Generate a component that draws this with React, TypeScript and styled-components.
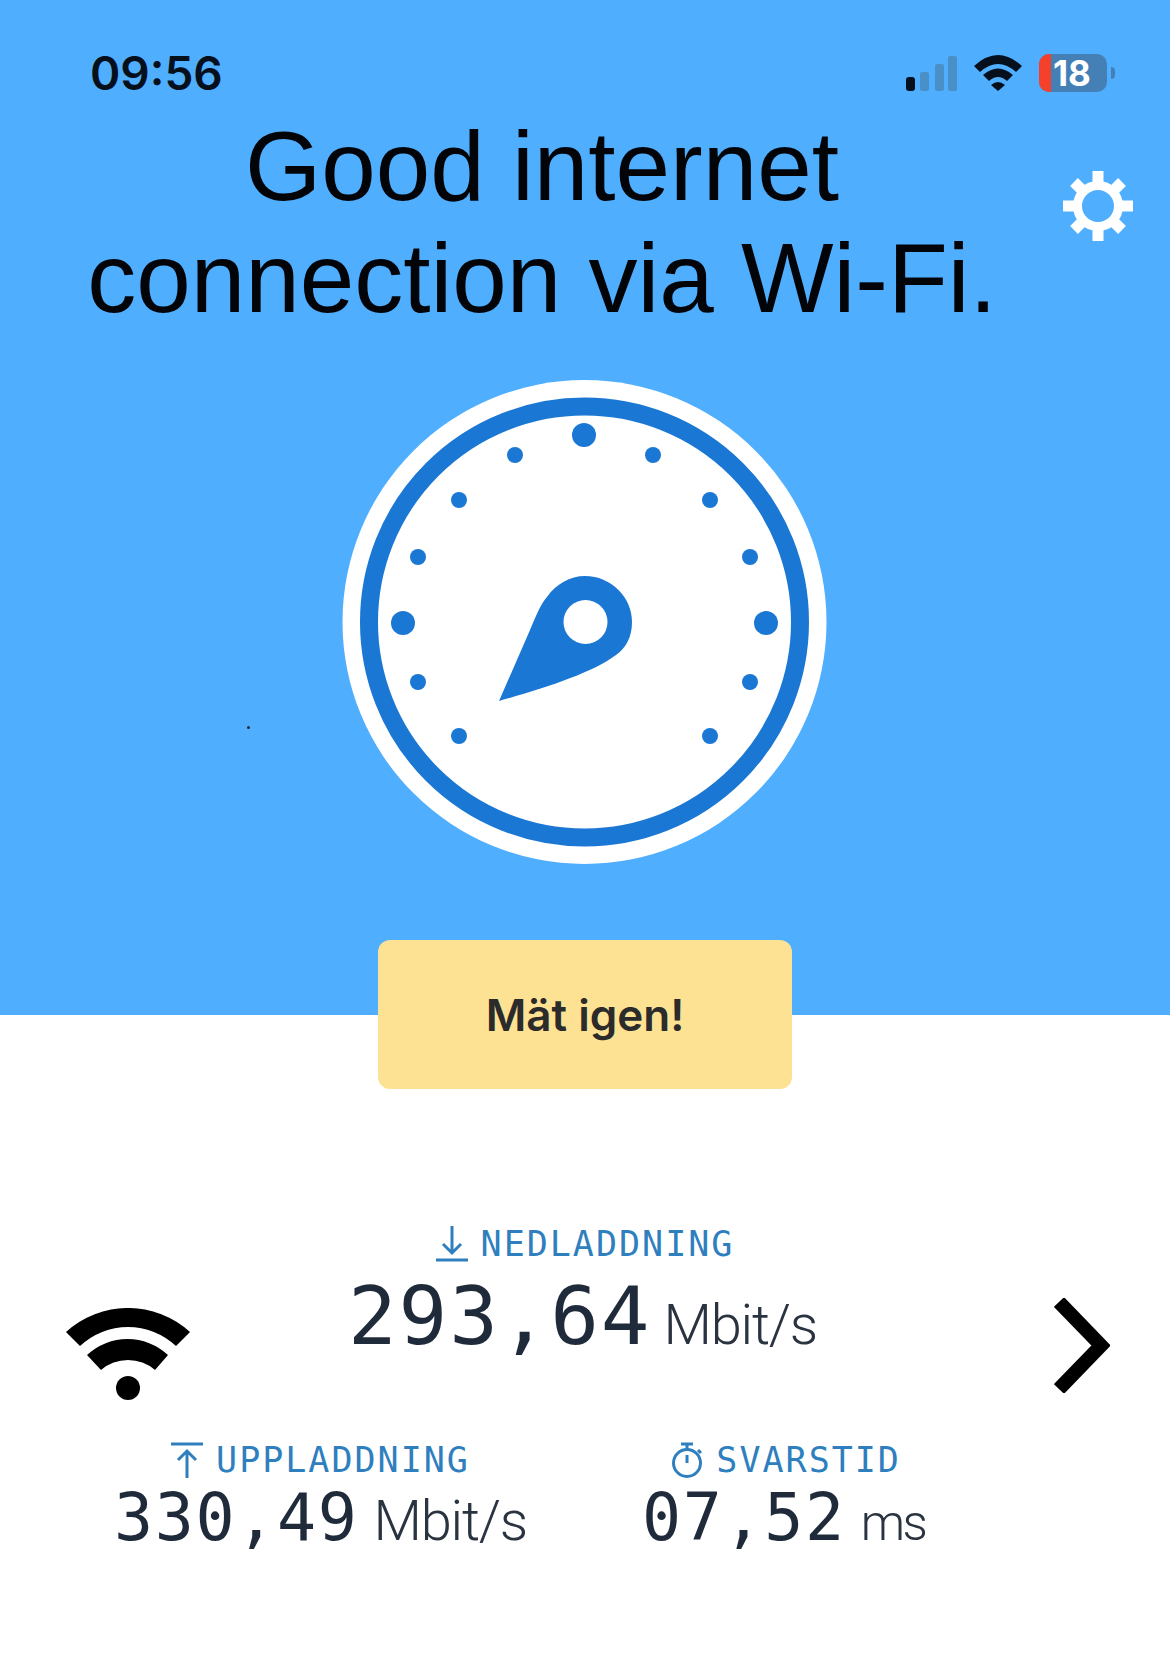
// 인터넷 속도 측정 결과 화면

import styled, { createGlobalStyle } from "styled-components";

const GlobalStyle = createGlobalStyle`
  html, body {
    margin: 0;
    padding: 0;
    background: #ffffff;
  }
  * {
    box-sizing: border-box;
  }
`;

const Page = styled.div`
  width: 1170px;
  height: 1676px;
  overflow: hidden;
  background: #ffffff;
  font-family: "Liberation Sans", Arial, sans-serif;
`;

const Hero = styled.section`
  position: relative;
  height: 1015px;
  padding-top: 54px;
  background: #50aeff;
`;

const StatusBar = styled.div`
  display: flex;
  align-items: center;
  height: 38px;
  padding: 0 55px 0 90px;
`;
const Time = styled.span`
  flex: 1;
  font-family: Inter, sans-serif;
  font-size: 46px;
  font-weight: 600;
  line-height: 38px;
  color: #06101c;
`;
const StatusIcons = styled.div`
  display: flex;
  align-items: center;
  gap: 17px;
`;
const Battery = styled.div`
  display: flex;
  align-items: center;
  width: 68px;
  height: 38px;
  border-radius: 10px;
  background: #4480b5;
`;
const BatteryLevel = styled.div`
  width: 12px;
  height: 100%;
  border-radius: 10px 0 0 10px;
  background: #f5402c;
`;
const BatteryText = styled.span`
  margin-left: 2px;
  font-family: Inter, sans-serif;
  font-size: 35px;
  font-weight: 700;
  line-height: 1;
  color: #ffffff;
`;
const BatteryCap = styled.div`
  width: 4px;
  height: 12px;
  margin-left: -13px;
  border-radius: 0 6px 6px 0;
  background: #4480b5;
`;

const TitleRow = styled.div`
  display: flex;
  align-items: flex-start;
  margin-top: 18px;
  padding-left: 80px;
`;
const Title = styled.h1`
  width: 924px;
  margin: 0;
  font-size: 98px;
  font-weight: 400;
  line-height: 112px;
  text-align: center;
  color: #020408;
`;
const GearIcon = styled.svg`
  width: 70px;
  height: 70px;
  margin: 61px 0 0 59px;
`;

const GaugeWrap = styled.div`
  display: flex;
  justify-content: center;
  margin-top: 46px;
`;
const Gauge = styled.svg`
  width: 500px;
  height: 500px;
  margin: -10px 10px -10px 0;
`;
const Speck = styled.i`
  position: absolute;
  left: 247px;
  top: 726px;
  width: 3px;
  height: 3px;
  border-radius: 50%;
  background: #1a2a3a;
`;

const ButtonRow = styled.div`
  display: flex;
  justify-content: center;
  margin-top: -75px;
`;
const MeasureButton = styled.button`
  position: relative;
  width: 414px;
  height: 149px;
  border: none;
  border-radius: 12px;
  background: #fde293;
  font-family: Inter, sans-serif;
  font-size: 44px;
  font-weight: 600;
  color: #2b2b2b;
`;

const Results = styled.section`
  display: flex;
  flex-direction: column;
  padding-top: 137px;
`;
const MainRow = styled.div`
  display: flex;
  align-items: flex-start;
  padding: 0 60px 0 66px;
`;
const WifiIcon = styled.svg`
  width: 124px;
  height: 92px;
  margin-top: 82px;
`;
const ChevronIcon = styled.svg`
  width: 56px;
  height: 95px;
  margin: 72px 0 0 auto;
`;
const CenterStat = styled.div`
  margin-left: 158px;
`;
const SubRow = styled.div`
  display: flex;
  gap: 115px;
  margin-top: 42px;
  padding-left: 114px;
`;

const Stat = styled.div`
  display: flex;
  flex-direction: column;
  align-items: center;
`;
const StatHead = styled.div<{ $inset?: number }>`
  display: flex;
  align-items: center;
  gap: 13px;
  height: 36px;
  padding-left: ${(p) => p.$inset ?? 0}px;
`;
const StatLabel = styled.span`
  font-family: "DejaVu Sans Mono", monospace;
  font-size: 35px;
  letter-spacing: 2px;
  line-height: 36px;
  color: #2f7fbf;
`;
const LabelIcon = styled.svg`
  width: 32px;
  height: 36px;
  flex: none;
  fill: none;
  stroke: #2f7fbf;
  stroke-width: 3;
`;
const StatValue = styled.div<{ $big?: boolean }>`
  display: flex;
  align-items: baseline;
  gap: ${(p) => (p.$big ? 12 : 15)}px;
  margin-top: ${(p) => (p.$big ? 10 : 4)}px;
  font-family: "DejaVu Sans Mono", monospace;
  font-size: ${(p) => (p.$big ? 81 : 65)}px;
  letter-spacing: ${(p) => (p.$big ? 1.8 : 1.6)}px;
  line-height: ${(p) => (p.$big ? 88 : 72)}px;
  color: #1f2a3a;
`;
const StatUnit = styled.span<{ $short?: boolean }>`
  font-family: Roboto, sans-serif;
  font-size: ${(p) => (p.$short ? 50 : 56)}px;
  font-weight: 300;
  letter-spacing: ${(p) => (p.$short ? -2.5 : -1.2)}px;
  color: #2a3340;
`;

const dots: [number, number, number][] = [
  [254, 65, 12],
  [185, 85, 8],
  [323, 85, 8],
  [129, 130, 8],
  [380, 130, 8],
  [88, 187, 8],
  [420, 187, 8],
  [73, 253, 12],
  [436, 253, 12],
  [88, 312, 8],
  [420, 312, 8],
  [129, 366, 8],
  [380, 366, 8],
];

const App = () => {
  return (
    <Page>
      <GlobalStyle />
      <Hero>
        <StatusBar>
          <Time>09:56</Time>
          <StatusIcons>
            <svg width="51" height="36" viewBox="0 0 51 36">
              <rect x="0" y="22" width="9" height="14" rx="3" fill="#06101c" />
              <rect x="14" y="17" width="9" height="19" rx="2" fill="#4a90c8" />
              <rect x="29" y="9" width="9" height="27" rx="2" fill="#4a90c8" />
              <rect x="42" y="1" width="9" height="35" rx="2" fill="#4a90c8" />
            </svg>
            <svg width="48" height="36" viewBox="0 0 48 36" fill="#06101c">
              <path d="M0 11Q24 -11 48 11L42 17Q24 1 6 17Z" />
              <path d="M9 20Q24 7 39 20L33 26Q24 18 15 26Z" />
              <path d="M17 30Q24 24 31 30L24 36Z" />
            </svg>
            <Battery>
              <BatteryLevel />
              <BatteryText>18</BatteryText>
            </Battery>
            <BatteryCap />
          </StatusIcons>
        </StatusBar>
        <TitleRow>
          <Title>
            Good internet
            <br />
            connection via Wi-Fi.
          </Title>
          <GearIcon viewBox="0 0 70 70" stroke="#ffffff" fill="none">
            <circle cx="35" cy="35" r="20.5" strokeWidth="9" />
            <path
              d="M35 0V14M35 56V70M0 35H14M56 35H70M11 11L20 20M50 50L59 59M59 11L50 20M20 50L11 59"
              strokeWidth="11"
            />
          </GearIcon>
        </TitleRow>
        <GaugeWrap>
          <Gauge viewBox="0 0 500 500">
            <circle cx="254.5" cy="252" r="242" fill="#ffffff" />
            <circle cx="254.5" cy="252" r="215.5" fill="none" stroke="#1a78d4" strokeWidth="18" />
            {dots.map(([cx, cy, r]) => (
              <circle key={`${cx}-${cy}`} cx={cx} cy={cy} r={r} fill="#1a78d4" />
            ))}
            <path
              d="M169 331L200 260C207 243 212 232 217 227C226 214 240 206 255 206C281 206 302 227 302 252C302 267 296 278 286 285C262 303 215 318 169 331Z"
              fill="#1a78d4"
            />
            <circle cx="255.5" cy="252" r="22" fill="#ffffff" />
          </Gauge>
        </GaugeWrap>
        <Speck />
      </Hero>
      <ButtonRow>
        <MeasureButton>Mät igen!</MeasureButton>
      </ButtonRow>
      <Results>
        <MainRow>
          <WifiIcon viewBox="0 0 124 92" fill="#000">
            <path d="M0 24A92 92 0 0 1 124 24L110 38A70 70 0 0 0 14 38Z" />
            <path d="M21 47A59.5 59.5 0 0 1 102 47L89 62A41.5 41.5 0 0 0 35 62Z" />
            <circle cx="62" cy="80" r="12" />
          </WifiIcon>
          <CenterStat>
            <Stat>
              <StatHead $inset={5}>
                <LabelIcon viewBox="0 0 32 36">
                  <path d="M16 0V27M7 18L16 27L25 18M0 34H32" />
                </LabelIcon>
                <StatLabel>NEDLADDNING</StatLabel>
              </StatHead>
              <StatValue $big>
                293,64
                <StatUnit>Mbit/s</StatUnit>
              </StatValue>
            </Stat>
          </CenterStat>
          <ChevronIcon viewBox="0 0 56 95">
            <path d="M5 4L47 47.5L5 91" fill="none" stroke="#000" strokeWidth="14" />
          </ChevronIcon>
        </MainRow>
        <SubRow>
          <Stat>
            <StatHead>
              <LabelIcon viewBox="0 0 32 36">
                <path d="M0 2H32M16 36V9M7 18L16 9L25 18" />
              </LabelIcon>
              <StatLabel>UPPLADDNING</StatLabel>
            </StatHead>
            <StatValue>
              330,49
              <StatUnit>Mbit/s</StatUnit>
            </StatValue>
          </Stat>
          <Stat>
            <StatHead $inset={5}>
              <LabelIcon viewBox="0 0 32 36">
                <path d="M10 2H22M16 2V7M16 13V21M27 8L30 11" />
                <circle cx="16" cy="21" r="13.5" />
              </LabelIcon>
              <StatLabel>SVARSTID</StatLabel>
            </StatHead>
            <StatValue>
              07,52
              <StatUnit $short>ms</StatUnit>
            </StatValue>
          </Stat>
        </SubRow>
      </Results>
    </Page>
  );
};

export default App;
